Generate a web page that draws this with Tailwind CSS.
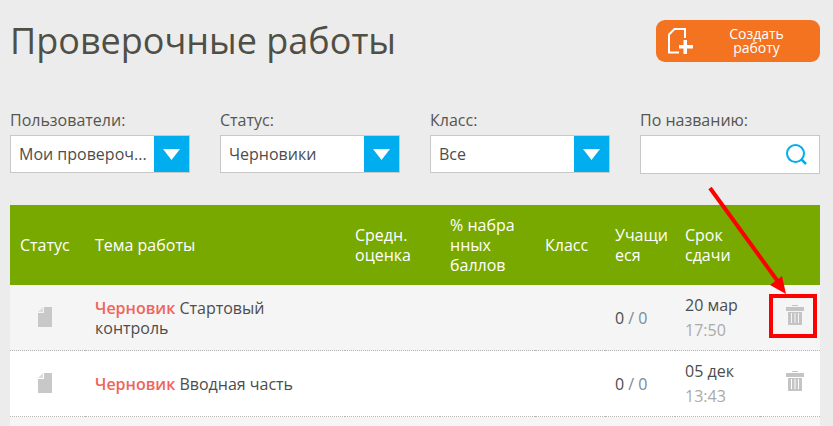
<!DOCTYPE html>
<html lang="ru">
<head>
    <meta charset="UTF-8">
    <title>Проверочные работы</title>
    <script src="https://cdn.jsdelivr.net/npm/@tailwindcss/browser@4"></script>
</head>
<body class="relative h-[426px] w-[833px] overflow-hidden bg-[#ececec] font-['Open_Sans',sans-serif] text-[#4d4d4d]">
    <div class="w-[810px] ml-[10px]">
        <!-- Header -->
        <div class="flex justify-between h-[110px]">
            <h1 class="text-[36px] leading-[48px] mt-[17px] text-[#4f4f45]">Проверочные работы</h1>
            <button class="flex items-center w-[164px] h-[42px] mt-[20px] rounded-[9px] bg-[#f47321] text-white text-[14px] leading-[14px]">
                <svg class="ml-[12px] shrink-0" width="25" height="26" viewBox="0 0 25 26" fill="none">
                    <path d="M11 24.500H1V6.500L6.500 1H17v9" stroke="#fff" stroke-width="2"/>
                    <path d="M11 17h4.500v-5h3.500v5H25v3.500h-6V26h-3.500v-5.500H11z" fill="#fff"/>
                </svg>
                <span class="flex-1 text-center">Создать<br>работу</span>
            </button>
        </div>

        <!-- Filters -->
        <div class="flex gap-[30px]">
            <div class="w-[180px]">
                <label class="block text-[16px] leading-[20px] mb-[5px] text-[#55554f]">Пользователи:</label>
                <div class="flex h-[38px] border border-[#c8c8c8] bg-white">
                    <span class="flex-1 pl-[8px] text-[16px] leading-[36px]">Мои провероч...</span>
                    <span class="flex items-center justify-center w-[35px] bg-[#00aeef]">
                        <svg width="18" height="11" viewBox="0 0 18 11"><path d="M0 0h17L8.500 11z" fill="#fff"/></svg>
                    </span>
                </div>
            </div>
            <div class="w-[180px]">
                <label class="block text-[16px] leading-[20px] mb-[5px] text-[#55554f]">Статус:</label>
                <div class="flex h-[38px] border border-[#c8c8c8] bg-white">
                    <span class="flex-1 pl-[8px] text-[16px] leading-[36px]">Черновики</span>
                    <span class="flex items-center justify-center w-[35px] bg-[#00aeef]">
                        <svg width="18" height="11" viewBox="0 0 18 11"><path d="M0 0h17L8.500 11z" fill="#fff"/></svg>
                    </span>
                </div>
            </div>
            <div class="w-[180px]">
                <label class="block text-[16px] leading-[20px] mb-[5px] text-[#55554f]">Класс:</label>
                <div class="flex h-[38px] border border-[#c8c8c8] bg-white">
                    <span class="flex-1 pl-[8px] text-[16px] leading-[36px]">Все</span>
                    <span class="flex items-center justify-center w-[35px] bg-[#00aeef]">
                        <svg width="18" height="11" viewBox="0 0 18 11"><path d="M0 0h17L8.500 11z" fill="#fff"/></svg>
                    </span>
                </div>
            </div>
            <div class="w-[180px]">
                <label class="block text-[16px] leading-[20px] mb-[5px] text-[#55554f]">По названию:</label>
                <div class="flex items-center justify-end h-[39px] pr-[12px] border border-[#c8c8c8] bg-white">
                    <svg width="21" height="21" viewBox="0 0 21 21" fill="none" stroke="#00aeef" stroke-width="2">
                        <circle cx="9.500" cy="9.500" r="8.500"/>
                        <path d="M15 15l5 5" stroke-width="2.500"/>
                    </svg>
                </div>
            </div>
        </div>

        <!-- Table -->
        <table class="table-fixed w-[810px] mt-[31px] border-separate border-spacing-0 text-[16px]">
            <colgroup>
                <col class="w-[75px]"><col class="w-[260px]"><col class="w-[95px]"><col class="w-[95px]"><col class="w-[70px]"><col class="w-[70px]"><col class="w-[85px]"><col class="w-[60px]">
            </colgroup>
            <thead class="bg-[#78a900] text-white">
                <tr class="h-[80px]">
                    <th class="pl-[10px] text-left font-normal leading-[20px]">Статус</th>
                    <th class="pl-[10px] text-left font-normal leading-[20px]">Тема работы</th>
                    <th class="pl-[10px] text-left font-normal leading-[20px]">Средн.<br>оценка</th>
                    <th class="pl-[10px] text-left font-normal leading-[20px]">% набра<br>нных<br>баллов</th>
                    <th class="pl-[10px] text-left font-normal leading-[20px]">Класс</th>
                    <th class="pl-[10px] text-left font-normal leading-[20px]">Учащи<br>еся</th>
                    <th class="pl-[10px] text-left font-normal leading-[20px]">Срок<br>сдачи</th>
                    <th></th>
                </tr>
            </thead>
            <tbody class="[&>tr>td]:border-b [&>tr>td]:border-dotted [&>tr>td]:border-[#b5b5b5]">
                <tr class="h-[66px] bg-[#f5f5f5]">
                    <td class="pl-[28px]">
                        <svg class="mb-[1px]" width="14" height="20" viewBox="0 0 14 20"><path d="M6 0h8v20H0V6h6z" fill="#c8c8c8"/><path d="M5 0v5H0z" fill="#dcdcdc"/></svg>
                    </td>
                    <td class="pl-[10px] leading-[20px]"><span class="font-semibold text-[#f0645a]">Черновик</span> Стартовый<br>контроль</td>
                    <td></td>
                    <td></td>
                    <td></td>
                    <td class="pl-[10px]">0 <span class="text-[#7a8a96]">/ 0</span></td>
                    <td class="pl-[10px] leading-[25px]">20 мар<br><span class="text-[#aaaaaa]">17:50</span></td>
                    <td class="pl-[26px]">
                        <svg class="mb-[5px]" width="18" height="20" viewBox="0 0 18 20" fill="#c4c4c4"><path d="M6 0h6v1H6zM0 2h18v4H0zM2 7h14v13H2z"/><path d="M5.500 8v10M9 8v10M12.500 8v10" stroke="#f5f5f5" stroke-width="1"/></svg>
                    </td>
                </tr>
                <tr class="h-[66px] bg-white">
                    <td class="pl-[28px]">
                        <svg class="mb-[1px]" width="14" height="20" viewBox="0 0 14 20"><path d="M6 0h8v20H0V6h6z" fill="#c8c8c8"/><path d="M5 0v5H0z" fill="#dcdcdc"/></svg>
                    </td>
                    <td class="pl-[10px] leading-[20px]"><span class="font-semibold text-[#f0645a]">Черновик</span> Вводная часть</td>
                    <td></td>
                    <td></td>
                    <td></td>
                    <td class="pl-[10px]">0 <span class="text-[#7a8a96]">/ 0</span></td>
                    <td class="pl-[10px] leading-[25px]">05 дек<br><span class="text-[#aaaaaa]">13:43</span></td>
                    <td class="pl-[26px]">
                        <svg class="mb-[5px]" width="18" height="20" viewBox="0 0 18 20" fill="#c4c4c4"><path d="M6 0h6v1H6zM0 2h18v4H0zM2 7h14v13H2z"/><path d="M5.500 8v10M9 8v10M12.500 8v10" stroke="#fff" stroke-width="1"/></svg>
                    </td>
                </tr>
                <tr class="h-[20px] bg-[#f5f5f5]"><td colspan="8"></td></tr>
            </tbody>
        </table>
    </div>

    <!-- Annotation drawn over the screenshot -->
    <div class="absolute left-[769px] top-[294px] w-[48px] h-[44px] border-[4px] border-[#ff0000]"></div>
    <svg class="absolute left-0 top-0" width="833" height="426" viewBox="0 0 833 426" fill="none">
        <path d="M710 188L779 283" stroke="#ff0000" stroke-width="4"/>
        <path d="M786 294L770 285L782 276z" fill="#ff0000"/>
    </svg>
</body>
</html>
